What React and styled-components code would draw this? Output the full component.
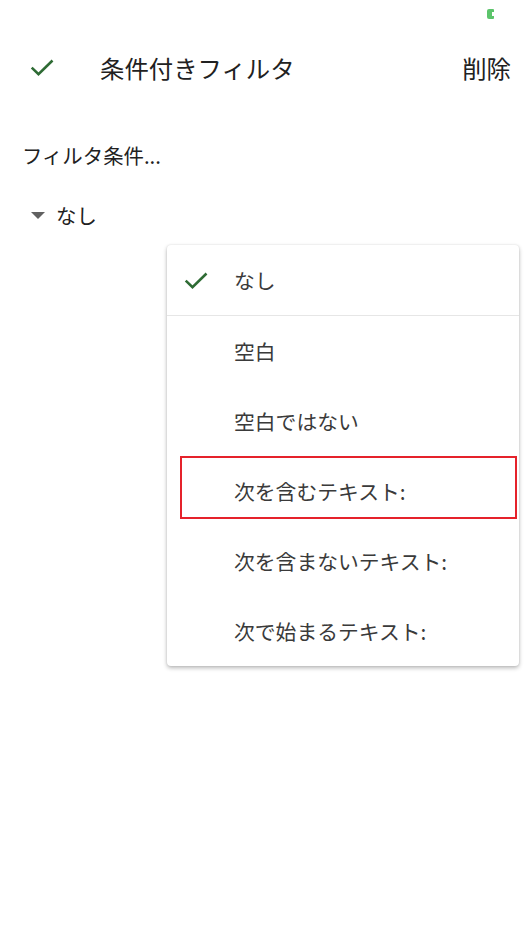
import React from "react";
import styled, { createGlobalStyle } from "styled-components";

const Global = createGlobalStyle`
  html, body { margin: 0; padding: 0; background: #fff; }
  body { font-family: "Noto Sans CJK JP", "Noto Sans", sans-serif; color: #212121; }
`;

const Page = styled.div`
  width: 525px;
  height: 934px;
  display: flex;
  flex-direction: column;
  position: relative;
  overflow: hidden;
`;

const StatusBar = styled.div`
  height: 27px;
  display: flex;
  justify-content: flex-end;
  align-items: flex-start;
  padding: 9px 31px 0 0;
  box-sizing: border-box;
`;

const Battery = styled.div`
  width: 7px;
  height: 10px;
  background: #5cc46b;
  border-radius: 2px 1px 1px 2px;
  position: relative;
  &::after {
    content: "";
    position: absolute;
    right: 0;
    top: 3px;
    width: 2px;
    height: 4px;
    background: #fff;
  }
`;

const Header = styled.div`
  height: 80px;
  display: flex;
  align-items: center;
  padding: 0 14px 0 28px;
`;

const HeaderTitle = styled.div`
  flex: 1;
  font-size: 24.4px;
  margin-left: 44px;
  color: #212121;
`;

const HeaderAction = styled.div`
  font-size: 24.4px;
  color: #212121;
`;

const Label = styled.div`
  font-size: 20.4px;
  padding-left: 22px;
  margin-top: 33px;
  height: 30px;
  line-height: 30px;
  color: #212121;
`;

const Dropdown = styled.div`
  display: flex;
  align-items: center;
  padding-left: 31px;
  margin-top: 30px;
  height: 30px;
  font-size: 20.4px;
  color: #212121;
`;

const Caret = styled.span`
  width: 0;
  height: 0;
  border-left: 7px solid transparent;
  border-right: 7px solid transparent;
  border-top: 7px solid #616161;
  margin-right: 11px;
`;

const Menu = styled.div`
  position: absolute;
  left: 167px;
  top: 245px;
  width: 352px;
  background: #fff;
  border-radius: 4px;
  box-shadow: 0 2px 4px rgba(0,0,0,0.28), 0 0 2px rgba(0,0,0,0.1);
  display: flex;
  flex-direction: column;
`;

const Item = styled.div`
  height: 70px;
  display: flex;
  align-items: center;
  font-size: 20.8px;
  color: #3a3a3a;
  position: relative;
  border-bottom: ${(p) => (p.$divider ? "1px solid #e6e6e6" : "none")};
  ${(p) =>
    p.$highlight &&
    `&::after {
      content: "";
      position: absolute;
      left: 13px;
      right: 2px;
      top: 0;
      bottom: 7px;
      border: 2.5px solid #e5222b;
    }`}
`;

const IconSlot = styled.div`
  width: 67px;
  display: flex;
  justify-content: flex-start;
  padding-left: 15px;
  box-sizing: border-box;
`;

const Check = ({ size = 26 }) => (
  <svg width={size} height={size} viewBox="0 0 24 24">
    <path d="M3.2 12.5 L9 18.2 L21 6.4" fill="none" stroke="#2e6b34" strokeWidth="2.2" />
  </svg>
);

const items = [
  { t: "なし", checked: true, divider: true },
  { t: "空白" },
  { t: "空白ではない" },
  { t: "次を含むテキスト:", highlight: true },
  { t: "次を含まないテキスト:" },
  { t: "次で始まるテキスト:" },
];

export default function App() {
  return (
    <>
      <Global />
      <Page>
        <StatusBar>
          <Battery />
        </StatusBar>
        <Header>
          <Check size={28} />
          <HeaderTitle>条件付きフィルタ</HeaderTitle>
          <HeaderAction>削除</HeaderAction>
        </Header>
        <Label>フィルタ条件...</Label>
        <Dropdown>
          <Caret />
          なし
        </Dropdown>
        <Menu>
          {items.map((it) => (
            <Item key={it.t} $divider={it.divider} $highlight={it.highlight}>
              <IconSlot>{it.checked && <Check size={28} />}</IconSlot>
              {it.t}
            </Item>
          ))}
        </Menu>
      </Page>
    </>
  );
}
